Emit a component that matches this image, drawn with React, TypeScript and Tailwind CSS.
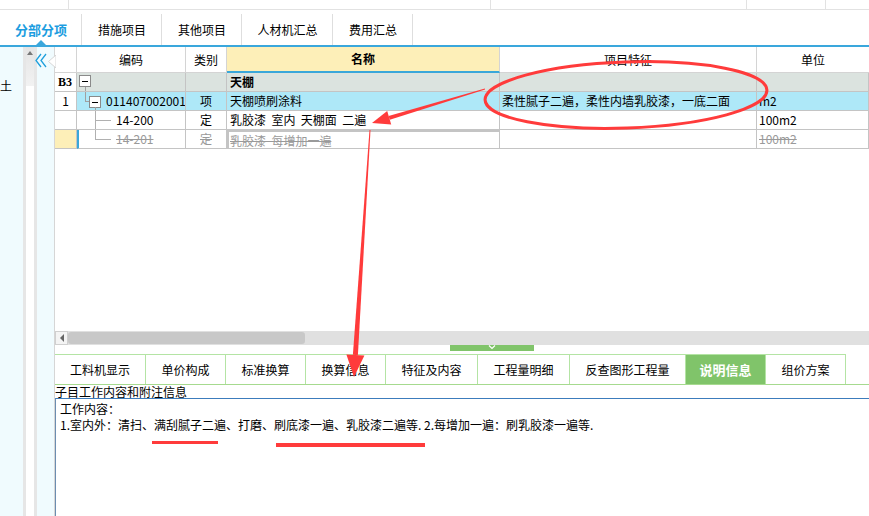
import React from 'react';

const line = 'border-[#c4c4c4]';

function MinusBox({ className }: { className: string }) {
  return (
    <span className={`absolute w-[12px] h-[12px] border border-[#8a8a8a] bg-white flex items-center justify-center ${className}`}>
      <span className="block w-[6px] h-[1px] bg-black" />
    </span>
  );
}

function Cell({
  w,
  bg = '',
  children,
  className = '',
}: {
  w: string;
  bg?: string;
  children?: React.ReactNode;
  className?: string;
}) {
  return (
    <div className={`${w} ${bg} h-[19px] shrink-0 border-r border-b ${line} relative leading-[18px] text-[12px] whitespace-nowrap overflow-hidden ${className}`}>
      {children}
    </div>
  );
}

const widths = ['w-[22px]', 'w-[109px]', 'w-[41px]', 'w-[273px]', 'w-[257px]', 'flex-1'];

function GridRows() {
  const b3 = 'bg-[#dbe3df]';
  const sel = 'bg-[#aee8f8]';
  return (
    <div className="flex flex-col">
      {/* B3 */}
      <div className="flex">
        <Cell w={widths[0]} className="pl-[3px] font-['Liberation_Serif',serif] font-bold">B3</Cell>
        <Cell w={widths[1]} bg={b3}>
          <MinusBox className="left-[2px] top-[2px]" />
          <span className="absolute left-[8px] top-[14px] w-[1px] h-[6px] bg-[#a0a0a0]" />
        </Cell>
        <Cell w={widths[2]} bg={b3} />
        <Cell w={widths[3]} bg={b3} className="pl-[3px] font-bold">天棚</Cell>
        <Cell w={widths[4]} bg={b3} />
        <Cell w={widths[5]} bg={b3} />
      </div>
      {/* 1 */}
      <div className="flex">
        <Cell w={widths[0]} className="text-center">1</Cell>
        <Cell w={widths[1]} bg={sel}>
          <span className="absolute left-[8px] top-0 w-[1px] h-[9px] bg-[#a0a0a0]" />
          <span className="absolute left-[8px] top-[9px] w-[5px] h-[1px] bg-[#a0a0a0]" />
          <MinusBox className="left-[12px] top-[4px]" />
          <span className="absolute left-[18px] top-[15px] w-[1px] h-[4px] bg-[#a0a0a0]" />
          <span className="absolute left-[29px] top-0">011407002001</span>
        </Cell>
        <Cell w={widths[2]} bg={sel} className="text-center">项</Cell>
        <Cell w={widths[3]} bg={sel} className="pl-[3px]">天棚喷刷涂料</Cell>
        <Cell w={widths[4]} bg={sel} className="pl-[2px]">柔性腻子二遍，柔性内墙乳胶漆，一底二面</Cell>
        <Cell w={widths[5]} bg={sel} className="pl-[2px]">m2</Cell>
      </div>
      {/* 14-200 */}
      <div className="flex">
        <Cell w={widths[0]} />
        <Cell w={widths[1]}>
          <span className="absolute left-[18px] top-0 w-[1px] h-[19px] bg-[#b0b0b0]" />
          <span className="absolute left-[18px] top-[9px] w-[16px] h-[1px] bg-[#b0b0b0]" />
          <span className="absolute left-[39px] top-0">14-200</span>
        </Cell>
        <Cell w={widths[2]} className="text-center">定</Cell>
        <Cell w={widths[3]} className="pl-[3px] whitespace-pre">乳胶漆  室内  天棚面  二遍</Cell>
        <Cell w={widths[4]} />
        <Cell w={widths[5]} className="pl-[2px]">100m2</Cell>
      </div>
      {/* 14-201 */}
      <div className="flex text-[#9a9a9a]">
        <Cell w={widths[0]} bg="bg-[#fdefb8]" />
        <Cell w={widths[1]} className="border-l-2 border-l-[#3aa7d9]">
          <span className="absolute left-[16px] top-0 w-[1px] h-[9px] bg-[#b0b0b0]" />
          <span className="absolute left-[16px] top-[9px] w-[16px] h-[1px] bg-[#b0b0b0]" />
          <span className="absolute left-[37px] top-0 line-through">14-201</span>
        </Cell>
        <Cell w={widths[2]} className="text-center line-through">定</Cell>
        <Cell w={widths[3]} className="pl-[1px] border-2 border-[#808080] leading-[15px] line-through whitespace-pre">乳胶漆  每增加一遍</Cell>
        <Cell w={widths[4]} />
        <Cell w={widths[5]} className="pl-[2px] line-through">100m2</Cell>
      </div>
    </div>
  );
}

function Annotations() {
  const red = '#ff3b3b';
  return (
    <svg className="absolute inset-0 pointer-events-none" width="869" height="516" viewBox="0 0 869 516">
      <ellipse cx="626" cy="95" rx="141" ry="33" fill="none" stroke={red} strokeWidth="3" transform="rotate(-2 626 95)" />
      <polygon points="485.1,89.5 484.9,88.5 388.6,115.9 389.8,119.7" fill={red} />
      <polygon points="372,123 391.2,124.5 387.2,111.1" fill={red} />
      <polygon points="370.5,130 369.5,130 352.9,354.8 357.9,355.2" fill={red} />
      <polygon points="354,377 364.4,355.6 346.4,354.4" fill={red} />
      <rect x="152" y="441" width="66" height="3" fill={red} />
      <rect x="276" y="443" width="149" height="4" fill={red} />
    </svg>
  );
}

export default function App() {
  const topTabs = [
    { label: '分部分项', w: 'w-[82px]', active: true },
    { label: '措施项目', w: 'w-[80px]' },
    { label: '其他项目', w: 'w-[80px]' },
    { label: '人材机汇总', w: 'w-[91px]' },
    { label: '费用汇总', w: 'w-[80px]' },
  ];
  const bottomTabs = [
    { label: '工料机显示', w: 'w-[91px]' },
    { label: '单价构成', w: 'w-[80px]' },
    { label: '标准换算', w: 'w-[80px]' },
    { label: '换算信息', w: 'w-[80px]' },
    { label: '特征及内容', w: 'w-[92px]' },
    { label: '工程量明细', w: 'w-[92px]' },
    { label: '反查图形工程量', w: 'w-[116px]' },
    { label: '说明信息', w: 'w-[80px]', active: true },
    { label: '组价方案', w: 'w-[80px]' },
  ];

  return (
    <div className="relative w-[869px] h-[516px] overflow-hidden bg-white text-black font-['Noto_Sans_CJK_SC','Liberation_Sans',sans-serif] text-[12px]">
      {/* top strip */}
      <div className="flex h-[10px] border-b border-[#e2e2e2]">
        <div className="w-[69px] border-r border-[#e2e2e2]" />
        <div className="w-[422px] border-r border-[#e2e2e2]" />
        <div className="w-[256px] border-r border-[#e2e2e2]" />
        <div className="w-[79px] border-r border-[#e2e2e2]" />
        <div className="flex-1" />
      </div>

      {/* main tabs */}
      <div className="flex h-[35px]">
        {topTabs.map((t) => (
          <div key={t.label} className={`${t.w} relative flex items-end justify-center pb-[7px]`}>
            <span className="absolute right-0 top-[4px] bottom-0 w-[1px] bg-[#dedede]" />
            <span className={t.active ? 'text-[13px] font-bold text-[#1c9de0] leading-[16px]' : 'leading-[16px]'}>{t.label}</span>
            {t.active && (
              <span className="absolute bottom-0 left-[36px] w-0 h-0 border-x-[5px] border-x-transparent border-b-[5px] border-b-[#3aa7dc]" />
            )}
          </div>
        ))}
      </div>
      <div className="h-[2px] bg-[#3aa7dc]" />

      <div className="flex h-[469px]">
        {/* left panel */}
        <div className="relative flex w-[55px] shrink-0">
          <div className="w-[23px] bg-[#f0fbfe] pt-[32px] leading-[14px]">
            <span>土</span>
          </div>
          <div className="w-[14px] border-x-[3px] border-[#e6e6e6] bg-white flex flex-col">
            <div className="h-[39px] bg-gradient-to-b from-[#e4e4e4] to-[#f2f2f2] flex justify-center pt-[4px]">
              <span className="w-0 h-0 border-x-[3px] border-x-transparent border-b-[4px] border-b-[#777]" />
            </div>
          </div>
          <div className="w-[18px] bg-[#f0fbfe] border-r border-[#d6d6d6] pt-[6px]">
            <svg width="13" height="15" viewBox="0 0 13 15" className="-ml-[2px]">
              <path d="M6 1 L1 7.5 L6 14" fill="none" stroke="#1e9fdc" strokeWidth="1.3" />
              <path d="M11 1 L6 7.5 L11 14" fill="none" stroke="#1e9fdc" strokeWidth="1.3" />
            </svg>
          </div>
          <svg className="absolute left-[48px] top-[8px]" width="8" height="13" viewBox="0 0 8 13">
            <path d="M8 0 L0.5 6.5 L8 13 Z" fill="#fff" stroke="#d6d6d6" strokeWidth="1" />
          </svg>
        </div>

        {/* right area */}
        <div className="flex-1 flex flex-col min-w-0">
          {/* grid header */}
          <div className="flex h-[26px] text-[12px]">
            <div className={`${widths[0]} shrink-0 border-r border-b border-[#d4d4d4]`} />
            <div className={`${widths[1]} shrink-0 border-r border-b border-[#d4d4d4] flex items-center justify-center`}>编码</div>
            <div className={`${widths[2]} shrink-0 border-r border-b border-[#d4d4d4] flex items-center justify-center`}>类别</div>
            <div className={`${widths[3]} shrink-0 bg-[#fdefb8] border-r border-[#d4d4d4] border-b-2 border-b-[#3aa7d9] flex items-center justify-center font-bold`}>名称</div>
            <div className={`${widths[4]} shrink-0 border-r border-b border-[#d4d4d4] flex items-center justify-center`}>项目特征</div>
            <div className="flex-1 border-b border-[#d4d4d4] flex items-center justify-center">单位</div>
          </div>
          <GridRows />
          <div className="h-[182px]" />

          {/* horizontal scrollbar */}
          <div className="flex h-[14px] bg-[#e0e0e0]">
            <div className="w-[13px] bg-[#f4f4f4] border border-[#d0d0d0] flex items-center justify-center">
              <span className="w-0 h-0 border-y-[4px] border-y-transparent border-r-[4px] border-r-[#666]" />
            </div>
            <div className="w-[237px] my-[1px] bg-[#c8c8c8] rounded-[3px]" />
          </div>

          {/* splitter */}
          <div className="h-[9px] relative">
            <div className="absolute left-[395px] top-0 w-[84px] h-[6px] bg-[#80c46a] flex justify-center">
              <svg width="8" height="5" viewBox="0 0 8 5">
                <path d="M1 0.5 L4 3.5 L7 0.5" fill="none" stroke="#fff" strokeWidth="1.2" />
              </svg>
            </div>
          </div>

          {/* bottom tabs */}
          <div className="flex h-[31px] border-b border-[#a6da8f]">
            {bottomTabs.map((t) => (
              <div
                key={t.label}
                className={`${t.w} shrink-0 border-t border-r border-[#b4e4a4] flex items-center justify-center ${
                  t.active ? 'bg-[#80c46a] text-white font-bold text-[13px]' : ''
                }`}
              >
                {t.label}
              </div>
            ))}
          </div>

          <div className="h-[13px] leading-[13px] whitespace-nowrap">子目工作内容和附注信息</div>

          {/* description */}
          <div className="flex-1 border-t border-[#3c7cbc] border-l border-l-[#6b8db0] pl-[4px] pt-[2px] leading-[16px] whitespace-nowrap">
            <div>工作内容：</div>
            <div>1.室内外：清扫、满刮腻子二遍、打磨、刷底漆一遍、乳胶漆二遍等. 2.每增加一遍：刷乳胶漆一遍等.</div>
          </div>
        </div>
      </div>

      <Annotations />
    </div>
  );
}
